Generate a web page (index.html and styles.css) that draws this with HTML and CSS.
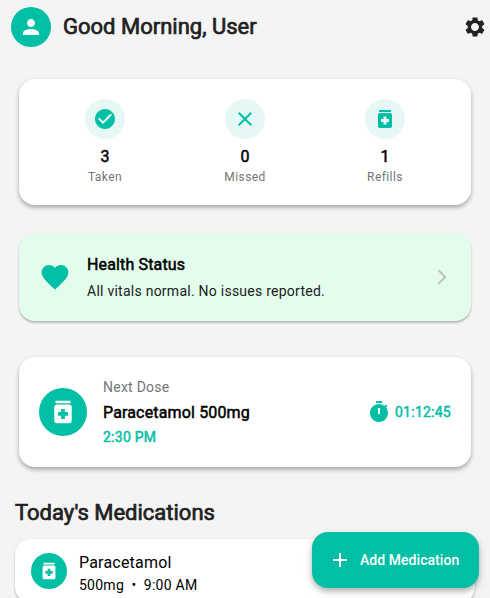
FILE: index.html
```html
<!DOCTYPE html>
<html lang="en">
<head>
<meta charset="utf-8">
<title>Medications</title>
<link rel="stylesheet" href="styles.css">
</head>
<body>
<svg class="defs" width="0" height="0" aria-hidden="true">
  <symbol id="pill" viewBox="0 0 24 24"><path d="M6 3h12v2H6zM17 6H7c-1.1 0-2 .9-2 2v11c0 1.1.9 2 2 2h10c1.1 0 2-.9 2-2V8c0-1.1-.9-2-2-2zm-1 9h-2.500v2.500h-3V15H8v-3h2.500V9.500h3V12H16v3z"/></symbol>
</svg>
<header class="bar">
  <div class="disc avatar"><svg class="i24" viewBox="0 0 24 24"><path d="M12 12c2.210 0 4-1.790 4-4s-1.790-4-4-4-4 1.790-4 4 1.790 4 4 4zm0 2c-2.670 0-8 1.340-8 4v2h16v-2c0-2.660-5.330-4-8-4z"/></svg></div>
  <h1 class="title bold"><span>Good Morning, User</span></h1>
  <svg class="i24 gear" viewBox="0 0 24 24"><path d="M19.140 12.940c.04-.3.06-.61.06-.94 0-.32-.02-.64-.07-.94l2.030-1.580c.18-.14.23-.41.12-.61l-1.920-3.320c-.12-.22-.37-.29-.59-.22l-2.390.96c-.5-.38-1.030-.7-1.620-.94l-.36-2.540c-.04-.24-.24-.41-.48-.41h-3.840c-.24 0-.43.17-.47.41l-.36 2.540c-.59.24-1.130.57-1.620.94l-2.390-.96c-.22-.08-.47 0-.59.22L2.740 8.870c-.12.21-.08.47.12.61l2.030 1.580c-.05.3-.09.63-.09.94s.02.64.07.94l-2.030 1.580c-.18.14-.23.41-.12.61l1.920 3.320c.12.22.37.29.59.22l2.390-.96c.5.38 1.030.7 1.620.94l.36 2.540c.05.24.24.41.48.41h3.840c.24 0 .44-.17.47-.41l.36-2.540c.59-.24 1.130-.56 1.620-.94l2.390.96c.22.08.47 0 .59-.22l1.920-3.320c.12-.22.07-.47-.12-.61l-2.010-1.580zM12 16c-2.200 0-4-1.800-4-4s1.800-4 4-4 4 1.800 4 4-1.800 4-4 4z"/></svg>
</header>
<main>
  <section class="card stats">
    <div class="stat">
      <div class="disc tint"><svg class="i24" viewBox="0 0 24 24"><path d="M12 2C6.480 2 2 6.480 2 12s4.480 10 10 10 10-4.480 10-10S17.520 2 12 2zm-2 15l-5-5 1.410-1.410L10 14.170l7.590-7.590L19 8l-9 9z"/></svg></div>
      <div class="num bold">3</div><div class="lab">Taken</div>
    </div>
    <div class="stat">
      <div class="disc tint"><svg class="i24" viewBox="0 0 24 24"><path d="M19 6.410L17.590 5 12 10.590 6.410 5 5 6.410 10.590 12 5 17.590 6.410 19 12 13.410 17.590 19 19 17.590 13.410 12z"/></svg></div>
      <div class="num bold">0</div><div class="lab">Missed</div>
    </div>
    <div class="stat">
      <div class="disc tint"><svg class="i24"><use href="#pill"/></svg></div>
      <div class="num bold">1</div><div class="lab">Refills</div>
    </div>
  </section>

  <section class="card health">
    <svg class="heart" viewBox="0 0 24 24"><path d="M12 21.350l-1.450-1.320C5.400 15.360 2 12.280 2 8.500 2 5.420 4.420 3 7.500 3c1.740 0 3.410.81 4.500 2.090C13.090 3.810 14.760 3 16.500 3 19.580 3 22 5.420 22 8.500c0 3.780-3.400 6.860-8.550 11.540L12 21.350z"/></svg>
    <div class="grow">
      <div class="name bold"><span>Health Status</span></div>
      <div class="vitals"><span>All vitals normal. No issues reported.</span></div>
    </div>
    <svg class="chev" viewBox="0 0 24 24"><path d="M6.230 20.230L8 22l10-10L8 2 6.230 3.770 14.460 12z"/></svg>
  </section>

  <section class="card next">
    <div class="disc dose"><svg class="i30"><use href="#pill"/></svg></div>
    <div class="grow">
      <div class="over"><span>Next Dose</span></div>
      <div class="drug bold"><span>Paracetamol 500mg</span></div>
      <div class="time bold"><span>2:30 PM</span></div>
    </div>
    <div class="timer">
      <svg class="i24" viewBox="0 0 24 24"><path d="M9 1h6v2H9zM19.030 7.390l1.420-1.420c-.43-.51-.9-.99-1.410-1.410l-1.420 1.420C16.070 4.740 14.120 4 12 4c-4.970 0-9 4.030-9 9s4.020 9 9 9 9-4.030 9-9c0-2.120-.74-4.070-1.970-5.610zM13 14h-2V8h2v6z"/></svg>
      <span class="bold">01:12:45</span>
    </div>
  </section>

  <h2 class="title bold"><span>Today's Medications</span></h2>
  <section class="card item">
    <div class="disc small"><svg class="i22"><use href="#pill"/></svg></div>
    <div class="i-text">
      <div class="i-name"><span>Paracetamol</span></div>
      <div class="i-sub"><span>500mg&nbsp; •&nbsp; 9:00 AM</span></div>
    </div>
  </section>
</main>
<button class="fab"><svg class="i24" viewBox="0 0 24 24"><path d="M19 13h-6v6h-2v-6H5v-2h6V5h2v6h6v2z"/></svg><span>Add Medication</span></button>
</body>
</html>
```
FILE: styles.css
```css
* { box-sizing: border-box; }
html, body { height: 598px; overflow: hidden; }
body { margin: 0; background: #f4f4f4; font-family: Roboto, sans-serif; font-weight: 400; color: #000; }
svg { display: block; fill: currentColor; flex: none; }
.defs { position: absolute; }
.i22 { width: 22px; height: 22px; }
.i24 { width: 24px; height: 24px; }
.i30 { width: 30px; height: 30px; }
.bold { -webkit-text-stroke: 0.5px currentColor; }
.grow { flex: 1; }
.disc { display: flex; align-items: center; justify-content: center; border-radius: 50%; flex: none; background: #00bfa5; color: #fff; }
.bar { display: flex; align-items: center; height: 54px; padding-left: 11px; padding-right: 3px; color: #212121; }
.avatar { width: 40px; height: 40px; margin-right: 12px; }
.title { margin: 0; font-size: 22px; line-height: 28px; font-weight: 400; color: #212121; -webkit-text-stroke-width: 0.7px; }
.bar .title { flex: 1; }
.gear { color: #212121; }
main { padding: 25px 19px 0; }
.card { display: flex; align-items: center; border-radius: 16px; background: #fff; box-shadow: 0 3px 4px rgba(0,0,0,.25), 0 1px 5px rgba(0,0,0,.07); }
.stats { height: 126px; padding: 20px 16px; align-items: flex-start; }
.stat { flex: 1; text-align: center; }
.tint { width: 40px; height: 40px; margin: 0 auto 6px; background: #e5f8f6; color: #00bfa5; }
.num { font-size: 16px; line-height: 24px; }
.lab { font-size: 12px; line-height: 16px; letter-spacing: .42px; color: #757575; }
.health { height: 88px; margin-top: 28px; padding: 0 20px; background: #e3fcec; box-shadow: 0 2px 2px rgba(0,0,0,.2), 0 1px 3px rgba(0,0,0,.08); }
.heart { width: 32px; height: 32px; margin-right: 16px; color: #00bfa5; }
.name { font-size: 16px; line-height: 24px; letter-spacing: .15px; margin-bottom: 4px; }
.vitals { font-size: 14px; line-height: 20px; letter-spacing: .25px; color: #212121; }
.chev { width: 18px; height: 18px; color: #bdbdbd; }
.next { height: 110px; margin-top: 36px; padding: 0 20px; }
.dose { width: 48px; height: 48px; margin-right: 16px; }
.over { font-size: 14px; line-height: 20px; letter-spacing: .25px; color: #757575; }
.drug { font-size: 16px; line-height: 24px; letter-spacing: .15px; margin: 4px 0 2px; }
.time { font-size: 14px; line-height: 20px; letter-spacing: .25px; color: #00bfa5; }
.timer { display: flex; align-items: center; gap: 4px; font-size: 14px; letter-spacing: .25px; color: #00bfa5; }
h2.title { margin: 32px -4px 12px; }
.item { height: 64px; margin: 0 -4px; padding: 0 16px; box-shadow: 0 2px 2px rgba(0,0,0,.2), 0 1px 3px rgba(0,0,0,.08); }
.small { width: 36px; height: 36px; margin-right: 12px; }
.i-text { padding-top: 3px; }
.i-name { font-size: 16px; line-height: 24px; letter-spacing: .2px; }
.i-sub { font-size: 14px; line-height: 20px; letter-spacing: .25px; }
.fab { position: absolute; right: 11px; bottom: 10px; width: 167px; height: 56px; display: flex; align-items: center; gap: 8px; padding: 0 20px 0 16px; border: 0; border-radius: 16px; background: #00bfa5; color: #fff; font: 500 14px/20px Roboto, sans-serif; letter-spacing: .05px; white-space: nowrap; box-shadow: 0 3px 5px rgba(0,0,0,.2), 0 4px 10px rgba(0,0,0,.14); }
```
